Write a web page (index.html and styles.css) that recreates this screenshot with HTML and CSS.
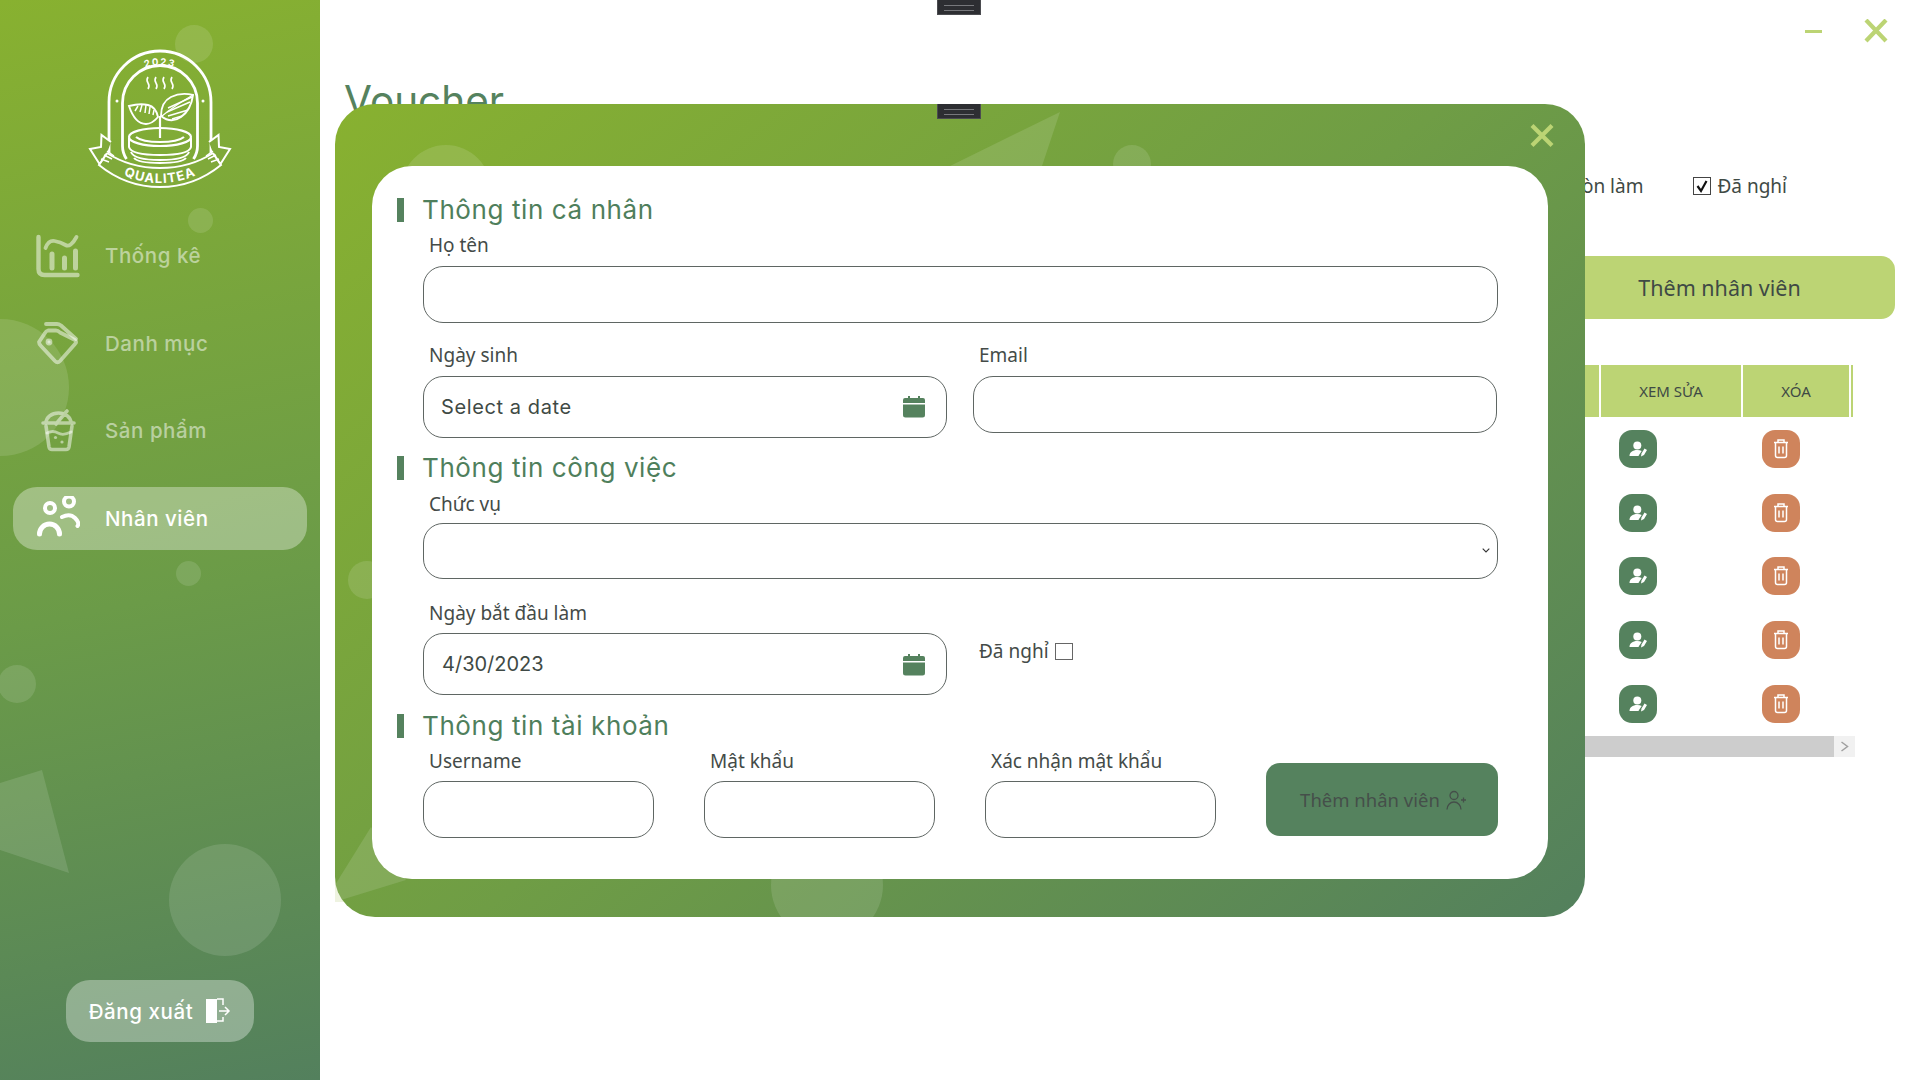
FILE: index.html
```html
<!DOCTYPE html>
<html lang="vi">
<head>
<meta charset="utf-8">
<title>Qualitea</title>
<link rel="stylesheet" href="styles.css">
</head>
<body>
<svg class="defs" width="0" height="0" aria-hidden="true">
  <symbol id="i-user-edit" viewBox="0 0 38 38">
    <circle cx="18.3" cy="15.6" r="4" fill="#fff"/>
    <path d="M10.500 26c0-3.500 3-6 7.800-6 1.800 0 3.200.3 4.400.9l-2.700 4-.5 1.100z" fill="#fff"/>
    <path d="M22 26.500l.5-3 3-5 2.500 1.500-3 5z" fill="#fff"/>
  </symbol>
  <symbol id="i-trash" viewBox="0 0 38 38">
    <path d="M12 12.500h14M16 12.500v-2.500h6v2.500M13.500 12.500v13q0 2 2 2h7q2 0 2-2v-13M17 16.500v7M21 16.500v7" fill="none" stroke="#fff" stroke-width="1.500"/>
  </symbol>
  <symbol id="i-cal" viewBox="0 0 22 22">
    <path d="M5 0h2v3H5zM15 0h2v3h-2z" fill="#55825e"/>
    <path d="M0 4q0-2 2-2h18q2 0 2 2v3H0zM0 8.500h22V19q0 2.500-2.500 2.500h-17Q0 21.500 0 19z" fill="#55825e"/>
  </symbol>
  <symbol id="i-check" viewBox="0 0 18 18">
    <path d="M4.500 9l3.500 5 5.500-10" fill="none" stroke="#111" stroke-width="2.200"/>
  </symbol>
</svg>

<div class="app">
  <aside class="sidebar">
    <span class="blob b1"></span><span class="blob b2"></span><span class="blob b3"></span>
    <span class="blob b4"></span><span class="blob b5"></span><span class="blob b6"></span>
    <svg class="side-tri" viewBox="0 0 69 103" width="69" height="103"><path d="M0 13L42 0l27 103L0 80z" fill="#fff" fill-opacity=".12"/></svg>

    <svg class="logo" viewBox="0 0 140 138" width="140" height="138" fill="none" stroke="#fff" stroke-width="2.200">
      <path d="M19 103V52a51 51 0 0 1 102 0v51" stroke-width="2.800"/>
      <path d="M32.500 96V53a37.500 37.500 0 0 1 75 0v43q0 7-4 13M32.500 96q0 7 4 13" stroke-width="2.800"/>
      <circle cx="27" cy="51" r="1.500" fill="#fff" stroke="none"/>
      <circle cx="113" cy="51" r="1.500" fill="#fff" stroke="none"/>
      <path d="M58 27q-2 3 0 6t0 6M66 27q-2 3 0 6t0 6M74 27q-2 3 0 6t0 6M82 27q-2 3 0 6t0 6" stroke-width="1.600"/>
      <path d="M39 56q11-3 19-1t10 12q-6 7-12 7-11 0-17-18z" stroke-width="1.900"/>
      <path d="M52 55l-2 7M56 55l-1 8M60 57l-1 7M64 60l-1 5M48 56l-3 5" stroke-width="1.500"/>
      <path d="M71 66q0-14 10-19t22-2q-2 15-12 22t-20-1z" stroke-width="1.900"/>
      <path d="M72 66q12-10 31-21" stroke-width="1.300"/>
      <path d="M78 66l20-6M82 69l10-3M77 62l23-10M78 58l24-11" stroke-width="1.500"/>
      <path d="M70 66v22"/>
      <ellipse cx="70" cy="87" rx="31" ry="9"/>
      <path d="M46 87q6 5 24 5t24-5"/>
      <path d="M39 88v9q2 8 31 8t31-8v-9M41 102q3 8 29 8t29-8M44 108q4 5 26 5t26-5" stroke-width="2"/>
      <path d="M9 115Q36 137 70 137t61-22l-8-12Q100 118 70 118t-53-15z" fill="#7fa93a" stroke-width="2"/>
      <path d="M21 92l-9.500-7-.5 12-11 2 9.500 15 7.500-11M119 92l9.500-7 .5 12 11 2-9.500 15-7.500-11" fill="#7fa93a" stroke-width="2"/>
      <path d="M11 109l8 3M14 105l8 4M17 101l7 5M129 109l-8 3M126 105l-8 4M123 101l-7 5" stroke-width="1.500"/>
      <path id="arc-top" d="M27 52a43.500 43.500 0 0 1 86 0" stroke="none"/>
      <path id="arc-bot" d="M24 120Q46 133 70 133t46-13" stroke="none"/>
      <text class="logo-year"><textPath href="#arc-top" startOffset="50%" text-anchor="middle">2023</textPath></text>
      <text class="logo-name"><textPath href="#arc-bot" startOffset="50%" text-anchor="middle">QUALITEA</textPath></text>
    </svg>

    <nav class="nav">
      <a class="nav-item">
        <svg class="nav-icon" viewBox="0 0 44 44" fill="none" stroke="currentColor" stroke-width="4.400" stroke-linecap="round" stroke-linejoin="round">
          <path d="M2.500 3v32q0 6 6 6h33"/>
          <path d="M9.500 14q3-8 9-7t11 4 11-8" stroke-width="3.800"/>
          <path d="M16 20v14M28.500 24v10M39.500 17v17" stroke-width="5"/>
        </svg>
        <span>Thống kê</span>
      </a>
      <a class="nav-item">
        <svg class="nav-icon" viewBox="0 0 44 44" fill="none" stroke="currentColor" stroke-width="3.800" stroke-linecap="round" stroke-linejoin="round">
          <path d="M10 3h11q2 0 4 1.500L40 18"/>
          <path d="M12 9.500h8q2 0 4 2L39 19q2 2 0 4L24 40q-2.500 2.500-5 0L5 25q-2-2-2-4l6-9q1-2 3-2.500z"/>
          <circle cx="13" cy="21" r="1.500" fill="currentColor"/>
        </svg>
        <span>Danh mục</span>
      </a>
      <a class="nav-item">
        <svg class="nav-icon" viewBox="0 0 44 44" fill="none" stroke="currentColor" stroke-width="3.600" stroke-linecap="round" stroke-linejoin="round">
          <path d="M7 14h31M10 14a12.500 10 0 0 1 25 0M31 2L20 15"/>
          <path d="M10 17l3 21q.5 2.500 3 2.500h14q2.500 0 3-2.500l3-21"/>
          <path d="M11 24q6-3 11 0t13-1" stroke-width="2.800"/>
          <circle cx="19.500" cy="28.500" r="1.600" fill="currentColor" stroke="none"/>
          <circle cx="26" cy="33" r="1.600" fill="currentColor" stroke="none"/>
        </svg>
        <span>Sản phẩm</span>
      </a>
      <a class="nav-item active">
        <svg class="nav-icon" viewBox="0 0 44 44" fill="none" stroke="currentColor" stroke-width="4" stroke-linecap="round">
          <circle cx="14" cy="12" r="5"/>
          <circle cx="33" cy="5.500" r="5"/>
          <path d="M3.500 38a10 10 0 0 1 20 0" stroke-width="5"/>
          <path d="M26 21q8-4 13 1t2.500 8" stroke-width="4"/>
        </svg>
        <span>Nhân viên</span>
      </a>
    </nav>

    <button class="logout">
      <span>Đăng xuất</span>
      <svg viewBox="0 0 26 26" width="26" height="26">
        <path d="M1 1h11v24H1z" fill="#fff"/>
        <path d="M12 1h6v6M18 19v4h-6M14 13h10M20 9l4 4-4 4" fill="none" stroke="#fff" stroke-width="1.500"/>
      </svg>
    </button>
  </aside>

  <main class="main">
    <div class="win-controls">
      <span class="win-min"></span>
      <svg class="win-close" viewBox="0 0 24 24" width="24" height="24"><path d="M2 1l20 21M22 1L2 22" stroke="#bcd474" stroke-width="4.200" fill="none"/></svg>
    </div>
    <h1 class="page-title">Voucher</h1>
    <div class="filters">
      <label class="filter"><span class="fbox"><svg width="18" height="18"><use href="#i-check"/></svg></span><span>Còn làm</span></label>
      <label class="filter"><span class="fbox"><svg width="18" height="18"><use href="#i-check"/></svg></span><span>Đã nghỉ</span></label>
    </div>
    <div class="actions"><button class="add-main">Thêm nhân viên</button></div>
    <div class="table">
      <div class="th th-fill"></div><div class="th">XEM SỬA</div><div class="th">XÓA</div><div class="th"></div>
      <div class="tr"><div></div><div class="td"><a class="act green"><svg width="38" height="38"><use href="#i-user-edit"/></svg></a></div><div class="td"><a class="act orange"><svg width="38" height="38"><use href="#i-trash"/></svg></a></div></div>
      <div class="tr"><div></div><div class="td"><a class="act green"><svg width="38" height="38"><use href="#i-user-edit"/></svg></a></div><div class="td"><a class="act orange"><svg width="38" height="38"><use href="#i-trash"/></svg></a></div></div>
      <div class="tr"><div></div><div class="td"><a class="act green"><svg width="38" height="38"><use href="#i-user-edit"/></svg></a></div><div class="td"><a class="act orange"><svg width="38" height="38"><use href="#i-trash"/></svg></a></div></div>
      <div class="tr"><div></div><div class="td"><a class="act green"><svg width="38" height="38"><use href="#i-user-edit"/></svg></a></div><div class="td"><a class="act orange"><svg width="38" height="38"><use href="#i-trash"/></svg></a></div></div>
      <div class="tr"><div></div><div class="td"><a class="act green"><svg width="38" height="38"><use href="#i-user-edit"/></svg></a></div><div class="td"><a class="act orange"><svg width="38" height="38"><use href="#i-trash"/></svg></a></div></div>
    </div>
    <div class="hscroll">
      <div class="hscroll-track"></div>
      <div class="hscroll-btn"><svg width="9" height="11" viewBox="0 0 9 11"><path d="M1.500 1l6 4.500-6 4.500" fill="none" stroke="#a0a0a0" stroke-width="1.500"/></svg></div>
    </div>
  </main>
</div>
<span class="grip grip-top"></span>
<span class="corner-ghost"></span>

<section class="modal">
  <span class="m-blob m1"></span><span class="m-blob m2"></span><span class="m-blob m3"></span><span class="m-blob m4"></span>
  <svg class="m-tri m-tri-top" viewBox="0 0 110 54" width="110" height="54"><path d="M0 54L110 0 92 54z" fill="#fff" fill-opacity=".12"/></svg>
  <svg class="m-tri m-tri-bot" viewBox="0 0 72 76" width="72" height="76"><path d="M36 0L0 58l6 15 65-20z" fill="#fff" fill-opacity=".12"/></svg>
  <span class="grip grip-modal"></span>
  <svg class="modal-close" viewBox="0 0 24 24" width="24" height="24"><path d="M2 1.500l20 20M22 1.500l-20 20" stroke="#bcd474" stroke-width="4.200" fill="none"/></svg>

  <form class="card">
    <h2 class="sec-title">Thông tin cá nhân</h2>
    <div class="field first-row">
      <label class="lbl lbl-wide">Họ tên</label>
      <input class="inp" type="text">
    </div>
    <div class="row-2">
      <div class="field">
        <label class="lbl lbl-wide">Ngày sinh</label>
        <div class="date"><span>Select a date</span><svg width="22" height="22"><use href="#i-cal"/></svg></div>
      </div>
      <div class="field">
        <label class="lbl lbl-wide">Email</label>
        <input class="inp" type="email">
      </div>
    </div>

    <h2 class="sec-title sec-2">Thông tin công việc</h2>
    <div class="field sec-first">
      <label class="lbl">Chức vụ</label>
      <div class="sel-wrap">
        <select class="sel"><option></option></select>
        <svg class="sel-arrow" viewBox="0 0 8 5" width="8" height="5"><path d="M.7.7L4 4 7.300.7" fill="none" stroke="#333" stroke-width="1.100"/></svg>
      </div>
    </div>
    <div class="row-2 row-start">
      <div class="field">
        <label class="lbl">Ngày bắt đầu làm</label>
        <div class="date"><span class="date-val">4/30/2023</span><svg class="cal-low" width="22" height="22"><use href="#i-cal"/></svg></div>
      </div>
      <label class="resigned"><span>Đã nghỉ</span><span class="box"></span></label>
    </div>

    <h2 class="sec-title sec-3">Thông tin tài khoản</h2>
    <div class="row-4">
      <div class="field"><label class="lbl">Username</label><input class="inp" type="text"></div>
      <div class="field"><label class="lbl">Mật khẩu</label><input class="inp" type="password"></div>
      <div class="field"><label class="lbl">Xác nhận mật khẩu</label><input class="inp" type="password"></div>
      <button class="add-btn" type="button">
        <span>Thêm nhân viên</span>
        <svg viewBox="0 0 20 20" width="20" height="20" fill="none" stroke="#454f4a" stroke-width="1.300"><circle cx="8" cy="5.500" r="4"/><path d="M1 19.500a7 7.500 0 0 1 14 0M15 10h5M17.500 7.500v5"/></svg>
      </button>
    </div>
  </form>
</section>
</body>
</html>
```

FILE: styles.css
```css
* { box-sizing: border-box; }
html, body { margin: 0; padding: 0; height: 100%; }
body { width: 1920px; height: 1080px; overflow: hidden; position: relative; background: #fff; font-family: "Noto Sans", "Open Sans", sans-serif; color: #3f4a45; }
.defs { position: absolute; }
.app { display: flex; width: 1920px; height: 1080px; }

/* sidebar */
.sidebar { position: relative; width: 320px; height: 1080px; flex: none; overflow: hidden; display: flex; flex-direction: column; align-items: center; background: linear-gradient(168deg, #88b130 0%, #6b9b48 55%, #53805d 100%); }
.blob { position: absolute; border-radius: 50%; background: rgba(255,255,255,.12); }
.b1 { left: 175px; top: 25px; width: 38px; height: 38px; }
.b2 { left: 188px; top: 208px; width: 25px; height: 25px; }
.b3 { left: -68px; top: 319px; width: 137px; height: 137px; }
.b4 { left: 176px; top: 561px; width: 25px; height: 25px; }
.b5 { left: -2px; top: 665px; width: 38px; height: 38px; }
.b6 { left: 169px; top: 844px; width: 112px; height: 112px; }
.side-tri { position: absolute; left: 0; top: 770px; }
.logo { position: relative; margin-top: 50px; flex: none; overflow: visible; }
.logo-year { font: 700 9.500px Inter, sans-serif; letter-spacing: 1.500px; fill: #fff; stroke: none; }
.logo-name { font: 700 13px Inter, sans-serif; letter-spacing: 1.100px; fill: #fff; stroke: none; }
.nav { position: relative; width: 294px; margin-top: 36px; display: flex; flex-direction: column; gap: 24.500px; }
.nav-item { height: 63px; border-radius: 24px; display: flex; align-items: center; padding-left: 23px; gap: 25px; font: 500 20.500px Inter, sans-serif; letter-spacing: .55px; color: rgba(255,255,255,.5); }
.nav-item.active { background: rgba(255,255,255,.34); color: #fff; }
.nav-icon { width: 44px; height: 44px; flex: none; }
.logout { position: relative; margin-top: auto; margin-bottom: 38px; width: 188px; height: 62px; border: 0; border-radius: 24px; background: rgba(255,255,255,.34); color: #fff; font: 500 20.500px Inter, sans-serif; letter-spacing: .6px; display: flex; align-items: center; justify-content: center; gap: 12px; }

/* page behind the dialog */
.main { flex: 1; min-width: 0; padding: 0 25px; position: relative; }
.win-controls { height: 62px; padding: 19px 7px 0 0; display: flex; justify-content: flex-end; align-items: flex-start; gap: 42px; }
.win-min { width: 17px; height: 3px; margin-top: 11px; background: #bcd474; }
.page-title { margin: 15px 0 0 -1px; font: 400 40.500px/1.200 Inter, sans-serif; color: #55825e; height: 45px; }
.filters { margin-top: 52px; display: flex; justify-content: flex-end; gap: 50px; padding-right: 108px; height: 24px; }
.filter { display: flex; align-items: center; gap: 6px; font-size: 19px; }
.fbox { width: 18px; height: 18px; border: 1px solid #444; display: block; }
.fbox svg { display: block; margin: -1px; }
.actions { margin-top: 58px; display: flex; justify-content: flex-end; }
.add-main { width: 351px; height: 63px; border: 0; border-radius: 14px; background: #bcd474; color: #3f4a45; font: 400 21.500px "Noto Sans", sans-serif; }
.table { margin-top: 46px; margin-right: 42px; display: grid; grid-template-columns: 1fr 140px 106px 2px; column-gap: 2px; }
.th { height: 52px; background: #bcd474; display: flex; align-items: center; justify-content: center; font-size: 15px; color: #3f4a45; }
.tr { grid-column: 1 / -1; display: grid; grid-template-columns: subgrid; height: 63.700px; }
.td { grid-column: span 1; padding: 13px 0 0 18px; }
.tr .td:nth-child(3) { padding-left: 19px; }
.act { display: block; width: 38px; height: 38px; border-radius: 13px; }
.act svg { display: block; }
.green { background: #55825e; }
.orange { background: #cf845c; }
.hscroll { margin-top: 1px; margin-right: 40px; height: 21px; display: flex; }
.hscroll-track { flex: 1; background: #cdcdcd; }
.hscroll-btn { width: 21px; background: #f1f1f1; display: flex; align-items: center; justify-content: center; }

/* grips */
.grip { position: absolute; width: 44px; height: 15px; background: #2d2e32; border: 1px solid #4b4c50; border-top: 0; }
.grip::before { content: ""; position: absolute; left: 6px; right: 6px; top: 5px; height: 4px; border-top: 1px solid #77787c; border-bottom: 1px solid #77787c; }
.grip-top { left: 937px; top: 0; }
.grip-modal { left: 602px; top: 0; }
.corner-ghost { position: absolute; left: 335px; top: 880px; width: 10px; height: 22px; background: #eef3e0; }

/* dialog */
.modal { position: absolute; left: 335px; top: 104px; width: 1250px; height: 813px; padding: 62px 37px 38px; border-radius: 40px; overflow: hidden; background: linear-gradient(140deg, #88b130 0%, #6f9d45 50%, #53805d 100%); }
.m-blob { position: absolute; border-radius: 50%; background: rgba(255,255,255,.12); }
.m1 { left: 66px; top: 41px; width: 90px; height: 90px; }
.m2 { left: 778px; top: 41px; width: 38px; height: 38px; }
.m3 { left: 13px; top: 457px; width: 38px; height: 38px; }
.m4 { left: 436px; top: 725px; width: 112px; height: 112px; }
.m-tri { position: absolute; }
.m-tri-top { left: 615px; top: 8px; }
.m-tri-bot { left: 0; top: 723px; }
.modal-close { position: absolute; left: 1195px; top: 20px; }

.card { position: relative; height: 713px; padding: 32px 50px 0 25px; border-radius: 40px; background: #fff; }
.sec-title { margin: 0; height: 24px; padding-left: 18px; border-left: 7px solid #55825e; font: 400 26px/24px Inter, sans-serif; letter-spacing: .6px; color: #4f7f5c; }
.field { display: flex; flex-direction: column; }
.lbl { display: block; height: 24px; line-height: 24px; padding-left: 6px; margin-bottom: 8px; font-size: 19px; color: #444b48; }
.first-row { margin: 11px 0 0 26px; }
.lbl-wide { margin-bottom: 9px; }
.row-2 { margin: 20px 0 0 26px; display: grid; grid-template-columns: 524px 524px; column-gap: 26px; align-items: start; }
.row-start { margin-top: 22px; }
.inp { width: 100%; height: 57px; margin: 0; padding: 0 16px; border: 1.500px solid #5f6663; border-radius: 20px; background: #fff; outline: 0; }
.date { height: 62px; padding: 0 21px 0 17px; border: 1.500px solid #5f6663; border-radius: 20px; background: #fff; display: flex; align-items: center; justify-content: space-between; font: 400 20px Inter, sans-serif; letter-spacing: .6px; color: #3f4a45; }
.date-val { letter-spacing: 0; margin-left: 1px; }
.date svg { flex: none; }
.cal-low { margin-top: 2px; }
.sec-2 { margin-top: 18px; }
.sec-3 { margin-top: 19px; }
.sec-first { margin: 12px 0 0 26px; }
.sel-wrap { position: relative; height: 56px; margin-top: -1px; }
.sel { appearance: none; display: block; width: 100%; height: 56px; margin: 0; border: 1.500px solid #5f6663; border-radius: 20px; background-color: #fff; outline: 0; }
.sel-arrow { position: absolute; right: 8px; top: 25px; }
.resigned { margin-top: 38px; padding-left: 6px; display: flex; align-items: center; gap: 6px; font-size: 19px; height: 24px; color: #444b48; }
.box { width: 18px; height: 17px; border: 1.500px solid #666; }
.row-4 { margin: 11px 0 0 26px; display: grid; grid-template-columns: 231px 231px 231px 232px; column-gap: 50px; align-items: start; }
.add-btn { margin-top: 14px; height: 73px; padding: 0 0 0 2px; border: 0; border-radius: 14px; background: #55825e; color: #454f4a; font: 400 18.500px "Noto Sans", sans-serif; display: flex; align-items: center; justify-content: center; gap: 6px; }
```
